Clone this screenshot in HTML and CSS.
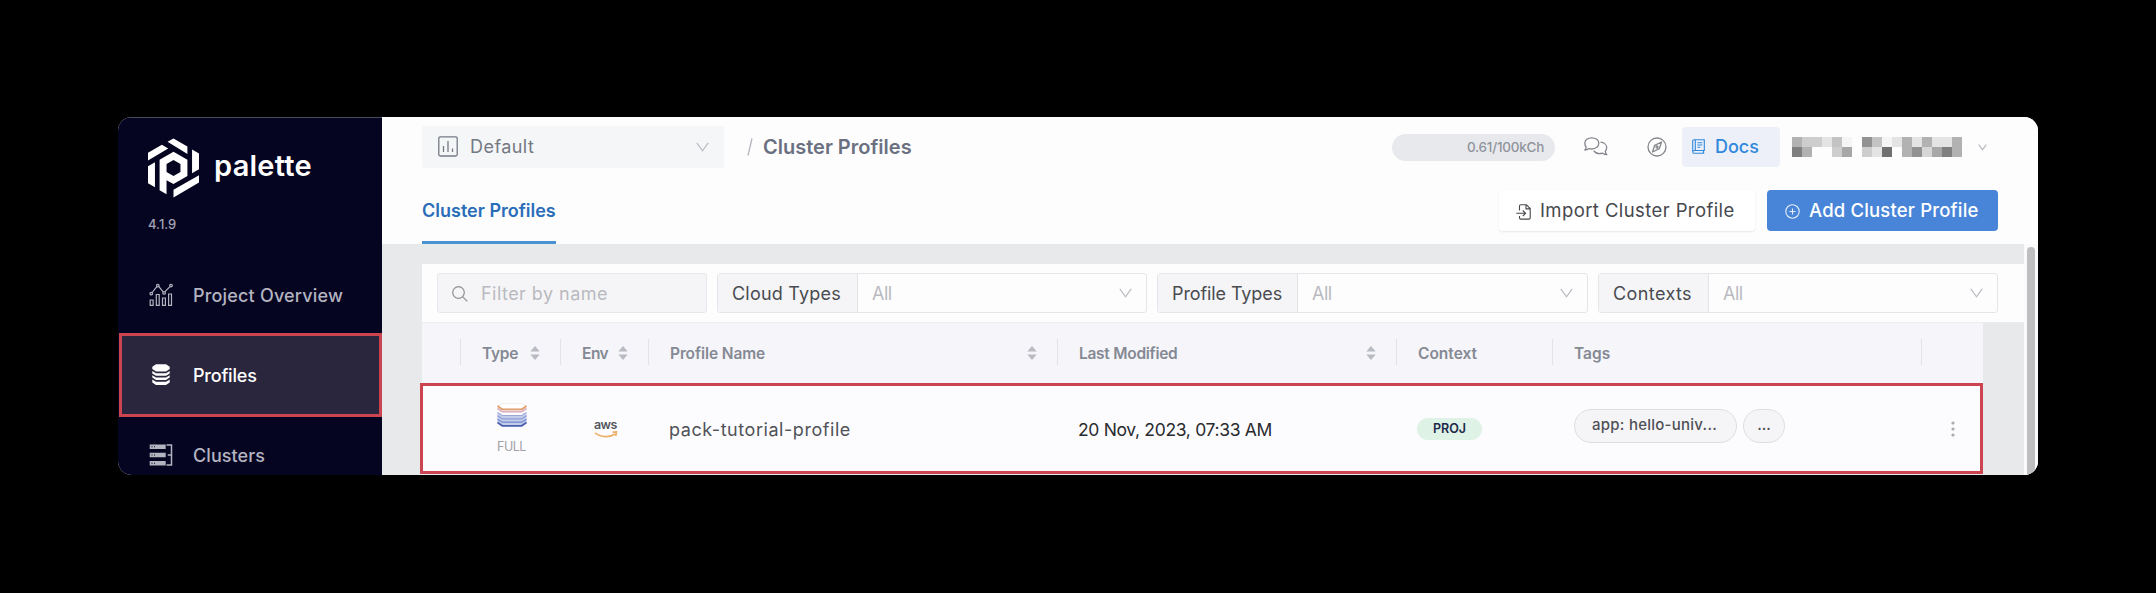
FILE: index.html
```
<!DOCTYPE html>
<html lang="en">
<head>
<meta charset="utf-8">
<title>Cluster Profiles</title>
<link rel="stylesheet" href="styles.css">
</head>
<body>
<div class="app">
  <aside class="sidebar">
    <div class="brand">
      <svg class="brand-mark" viewBox="144 114 154 180" fill="#fff">
        <path d="M144 158L186 134L205 145L144 181ZM203 125L221 115L263 139V162ZM277 148L298 160V208L277 220ZM298 226V248L221 293V270ZM144 199L165 187V262L144 250Z"/>
        <path fill-rule="evenodd" d="M179 179L221 155L263 179V228L221 252L200 241V283L179 271ZM221 180L200 192V216L221 228L242 216V192Z"/>
      </svg>
      <span class="brand-name">palette</span>
    </div>
    <span class="version">4.1.9</span>
    <nav class="nav">
      <a class="nav-item">
        <svg class="nav-icon" viewBox="0 0 24 24" fill="none" stroke="currentColor" stroke-width="1.2">
          <path d="M1.200 17h2.900v5.300H1.200zM7.300 11.500h2.900v10.800H7.300zM13.500 15h2.900v7.300h-2.900zM19.600 11h2.900v11.300h-2.900zM3.200 9.500l4.600-5.800M9.900 3.700l4.200 5.200M16 8.700l5-5"/>
          <circle cx="2.300" cy="10.600" r="1.300"/><circle cx="8.800" cy="2.600" r="1.300"/><circle cx="15.100" cy="9.900" r="1.300"/><circle cx="22" cy="2.600" r="1.300"/>
        </svg>
        <span class="nav-text overview">Project Overview</span>
      </a>
      <a class="nav-item active">
        <svg class="nav-icon" viewBox="0 0 24 24" fill="currentColor">
          <path d="M3.300 3.800L7 1.300h10l3.700 2.500v2.300L17 8.500H7L3.300 6.100z"/>
          <path d="M3.300 7.900L7 10.200h10l3.700-2.300v2.500L17 12.800H7l-3.700-2.400zM3.300 12.200L7 14.500h10l3.700-2.300v2.400L17 17H7l-3.700-2.400zM3.300 16.400L7 18.700h10l3.700-2.300v3L17 22H7l-3.700-2.600z"/>
        </svg>
        <span class="nav-text profiles">Profiles</span>
      </a>
      <a class="nav-item">
        <svg class="nav-icon" viewBox="0 0 24 24" fill="none" stroke="currentColor">
          <path stroke-width="4.400" d="M.7 3.800h16M.7 12h16M.7 20.200h16"/>
          <path stroke-width="1.500" d="M17.500 2h5v20h-5M18.800 12h3.700"/>
          <path stroke="#050522" stroke-width="1.100" d="M2.500 3.800h1M5 3.800h1M2.500 12h1M5 12h1M2.500 20.200h1M5 20.200h1"/>
        </svg>
        <span class="nav-text clusters">Clusters</span>
      </a>
    </nav>
  </aside>

  <main class="main">
    <header class="header">
      <div class="topbar">
        <div class="project">
          <svg class="project-icon" viewBox="0 0 20 21" fill="none" stroke="currentColor" stroke-width="1.300"><rect x=".8" y=".8" width="18.400" height="19.200" rx="1.500"/><path d="M5.500 10v6M10 5v11M14.500 12.500V16"/></svg>
          <span class="project-name">Default</span>
          <svg class="chevron" viewBox="0 0 13 10"><path d="M.8.8l5.700 8L12.200.8"/></svg>
        </div>
        <svg class="slash" viewBox="0 0 6 18"><path d="M5 .5L1 17.500"/></svg>
        <h1 class="title">Cluster Profiles</h1>
        <div class="tools">
          <div class="usage"><span class="usage-text">0.61/100kCh</span></div>
          <svg class="chat" viewBox="0 0 24 20" fill="none" stroke="currentColor" stroke-width="1.300" stroke-linejoin="round">
            <path d="M7.800.8c4 0 7 2.300 7 5.500s-3 5.700-7 5.700c-1 0-2-.1-2.900-.5C3.800 12.500 2.500 13 .8 13c1-1 1.400-2 1.300-3C1.200 9 .8 7.800.8 6.300.8 3.100 3.800.8 7.800.8z"/>
            <path d="M16.500 5.200c3.500.3 6.200 2.500 6.200 5.400 0 1.300-.5 2.600-1.400 3.600 0 1.200.5 2.300 1.500 3.500-1.600 0-3-.5-4.200-1.500-3.600 1-7.200 0-8.900-2.600"/>
          </svg>
          <svg class="compass" viewBox="0 0 20 20" fill="none" stroke="currentColor" stroke-width="1.300" stroke-linejoin="round"><circle cx="10" cy="10" r="9"/><path d="M14.500 5l-2.200 6.700L5.500 15l2.200-6.700z"/><circle cx="10" cy="10" r="1"/></svg>
          <a class="docs">
            <svg class="docs-icon" viewBox="0 0 13 15" fill="none" stroke="currentColor" stroke-width="1.100"><path d="M2 .7h10.300v10.800H2.200a1.400 1.400 0 0 0 0 2.800h10.100M.7 12.800V2A1.300 1.300 0 0 1 2 .7M3.300.7v10.800M11.500 11.500v2.800M5.300 3.700h5M5.300 6h5M5.300 8.300h3"/></svg>
            <span class="docs-text">Docs</span>
          </a>
          <svg class="user" viewBox="0 0 17 2" shape-rendering="crispEdges">
            <path fill="#b2b2b2" d="M0 0h1v1H0zM1 1h1v1H1zM11 0h1v2h-1zM13 0h1v1h-1zM16 0h1v2h-1z"/>
            <path fill="#808080" d="M0 1h1v1H0zM15 1h1v1h-1z"/>
            <path fill="#929292" d="M7 0h1v1H7zM12 1h1v1h-1z"/>
            <path fill="#cdcdcd" d="M1 0h2v1H1zM4 1h1v1H4zM7 1h1v1H7z"/>
            <path fill="#c3c3c3" d="M4 0h1v1H4zM8 0h1v1H8z"/>
            <path fill="#e4e4e4" d="M3 0h1v1H3zM8 1h1v1H8zM10 0h1v1h-1zM12 0h1v1h-1zM14 0h2v1h-2z"/>
            <path fill="#d6d6d6" d="M13 1h1v1h-1z"/>
            <path fill="#f5f5f5" d="M5 0h1v1H5zM9 0h1v1H9z"/>
            <path fill="#a7a7a7" d="M5 1h1v1H5zM14 1h1v1h-1z"/>
            <path fill="#707070" d="M9 1h1v1H9z"/>
          </svg>
          <svg class="chevron small" viewBox="0 0 9 7"><path d="M.7.7l3.800 5L8.300.7"/></svg>
        </div>
      </div>
      <div class="tabbar">
        <a class="tab"><span class="tab-text">Cluster Profiles</span></a>
        <div class="actions">
          <button class="btn import">
            <svg class="import-icon" viewBox="0 0 15 16" fill="none" stroke="currentColor" stroke-width="1.100"><path d="M3.500 6.500V2A1.300 1.300 0 0 1 4.800.7h5.500l3.900 3.900v9.200a1.300 1.300 0 0 1-1.300 1.300H4.800a1.300 1.300 0 0 1-1.300-1.300V12M10 .9v4h4M.3 9.300h9M6.800 6.500l2.800 2.800L6.800 12"/></svg>
            <span class="import-text">Import Cluster Profile</span>
          </button>
          <button class="btn add">
            <svg class="add-icon" viewBox="0 0 15 15" fill="none" stroke="currentColor" stroke-width="1.100"><circle cx="7.500" cy="7.500" r="6.700"/><path d="M7.500 4.500v6M4.500 7.500h6"/></svg>
            <span class="add-text">Add Cluster Profile</span>
          </button>
        </div>
      </div>
    </header>

    <section class="content">
      <div class="scroll">
        <div class="filters">
          <div class="search">
            <svg class="search-icon" viewBox="0 0 16 16" fill="none" stroke="currentColor" stroke-width="1.200"><circle cx="6.500" cy="6.500" r="5.800"/><path d="M10.800 10.800l4.500 4.500"/></svg>
            <span class="search-text">Filter by name</span>
          </div>
          <div class="filter cloud"><span class="filter-label"><span class="cloud-text">Cloud Types</span></span><span class="filter-value"><span class="all">All</span><svg class="chevron" viewBox="0 0 13 10"><path d="M.8.8l5.700 8L12.200.8"/></svg></span></div>
          <div class="filter types"><span class="filter-label"><span class="types-text">Profile Types</span></span><span class="filter-value"><span class="all">All</span><svg class="chevron" viewBox="0 0 13 10"><path d="M.8.8l5.700 8L12.200.8"/></svg></span></div>
          <div class="filter contexts"><span class="filter-label"><span class="contexts-text">Contexts</span></span><span class="filter-value"><span class="all">All</span><svg class="chevron" viewBox="0 0 13 10"><path d="M.8.8l5.700 8L12.200.8"/></svg></span></div>
        </div>
        <div class="table">
          <div class="row head">
            <div class="th"></div>
            <div class="th"><span class="type-text">Type</span><svg class="sort" viewBox="0 0 10 14"><path d="M5 0l4.700 5.500H.3zM5 14L.3 8.500h9.400z"/></svg></div>
            <div class="th tight"><span class="env-text">Env</span><svg class="sort" viewBox="0 0 10 14"><path d="M5 0l4.700 5.500H.3zM5 14L.3 8.500h9.400z"/></svg></div>
            <div class="th spread"><span class="name-text">Profile Name</span><svg class="sort" viewBox="0 0 10 14"><path d="M5 0l4.700 5.500H.3zM5 14L.3 8.500h9.400z"/></svg></div>
            <div class="th spread"><span class="modified-text">Last Modified</span><svg class="sort" viewBox="0 0 10 14"><path d="M5 0l4.700 5.500H.3zM5 14L.3 8.500h9.400z"/></svg></div>
            <div class="th"><span class="context-text">Context</span></div>
            <div class="th"><span class="tags-text">Tags</span></div>
            <div class="th"></div>
          </div>
          <div class="row item">
            <div class="td"></div>
            <div class="td type">
              <svg class="stack" viewBox="0 0 30 24" fill="none" stroke-width="1.200">
                <path fill="#fff" stroke="#f0e9ea" stroke-width=".8" d="M.5 3.500L5 .7h20l4.500 2.800L25 6H5z"/>
                <path stroke="#e3a06d" stroke-width="1.800" d="M.5 3l4.800 3.300h19.400L29.500 3"/>
                <path stroke="#d9b0bd" stroke-width="1.800" d="M.5 5.500l4.800 3.200h19.400l4.800-3.200"/>
                <path fill="#c3cdea" stroke="none" d="M.3 10l5 3h19.400l5-3v10l-5 3.300H5.300l-5-3.300z"/>
                <path stroke="#9aa8d8" d="M.5 9.500l4.800 3h19.400l4.800-3"/>
                <path stroke="#8e9fd6" d="M.5 12.800l4.800 3h19.400l4.800-3"/>
                <path stroke="#7288cb" d="M.5 16.200l4.800 3h19.400l4.800-3"/>
                <path stroke="#4b5fae" stroke-width="1.800" d="M.5 19.500l4.800 3.300h19.400l4.800-3.300"/>
              </svg>
              <span class="full-text">FULL</span>
            </div>
            <div class="td env">
              <span class="aws-text">aws</span>
              <svg class="aws-smile" viewBox="0 0 24 8" fill="none" stroke="#edb26a" stroke-width="1.700"><path d="M1 1.800c6 4.800 15 4.800 20 1.200M18.500 1.200l4-.2-.8 4"/></svg>
            </div>
            <div class="td"><span class="profile-text">pack-tutorial-profile</span></div>
            <div class="td"><span class="date-text">20 Nov, 2023, 07:33 AM</span></div>
            <div class="td"><span class="badge"><span class="proj-text">PROJ</span></span></div>
            <div class="td tags"><span class="tag"><span class="tag-text">app: hello-univ...</span></span><span class="tag more"><span class="more-text">...</span></span></div>
            <div class="td menu"><svg class="kebab" viewBox="0 0 4 16"><circle cx="2" cy="2" r="1.600"/><circle cx="2" cy="8" r="1.600"/><circle cx="2" cy="14" r="1.600"/></svg></div>
          </div>
        </div>
      </div>
      <div class="scrollbar"><div class="thumb"></div></div>
    </section>
  </main>
</div>
</body>
</html>
```
FILE: styles.css
```
* { box-sizing: border-box; }
body { margin: 0; padding: 117px 118px 0; height: 593px; background: #000; font-family: Inter, "Open Sans", sans-serif; font-size: 18px; line-height: 1; overflow: hidden; }
svg { display: block; flex: none; }
span, h1 { white-space: nowrap; line-height: 1.25; }

.app { display: grid; grid-template-columns: 264px 1fr; width: 1920px; height: 358px; border-radius: 14px; overflow: hidden; background: #fdfdfe; }

.sidebar { background: #050522; color: #b4b4c0; border-top: 1px solid #4a4a5c; }
.brand { display: flex; align-items: center; height: 60px; margin: 20px 0 0 30px; gap: 15px; }
.brand-mark { width: 51px; height: 60px; }
.brand-name { color: #fff; font-size: 29px; font-weight: 600; letter-spacing: .25px; padding-bottom: 3px; }
.version { display: block; margin: 19px 0 0 30px; font-size: 13px; line-height: 14px; font-weight: 500; color: #a3a3b3; }
.nav { margin-top: 24px; }
.nav-item { display: flex; align-items: center; height: 80px; padding-left: 31px; gap: 20px; }
.nav-item.active { height: 84px; margin: -2px 0 -2px 1px; padding-left: 27px; border: 3px solid #cb4450; background: #29263d; color: #fff; }
.nav-icon { width: 24px; height: 24px; }
.nav-text { font-weight: 500; padding-top: 2px; }
.overview { letter-spacing: .18px; }
.profiles { letter-spacing: -.2px; }
.clusters { letter-spacing: .08px; }

.main { min-width: 0; display: flex; flex-direction: column; }
.header { height: 127px; padding: 9px 40px 0; background: #fdfdfe; }
.topbar { display: flex; align-items: center; height: 42px; }
.project { display: flex; align-items: center; width: 302px; height: 42px; padding: 0 15px 0 16px; background: #f5f6f8; color: #747983; border-radius: 2px; }
.project-icon { width: 20px; height: 21px; margin: 0 12px 2px 0; }
.project-name { letter-spacing: .45px; padding-top: 1px; }
.chevron { width: 13px; height: 10px; margin-left: auto; fill: none; stroke: #b9bbc1; stroke-width: 1.2; }
.slash { width: 6px; height: 18px; margin: 0 10px 1px 23px; fill: none; stroke: #b3b6bd; stroke-width: 1.3; }
.title { margin: 0; font-size: 20px; font-weight: 600; color: #6b7081; }
.tools { display: flex; align-items: center; margin-left: auto; margin-right: -29px; width: 635px; }
.usage { display: flex; align-items: center; justify-content: flex-end; width: 163px; height: 27px; padding-right: 11px; border-radius: 14px; background: #e8e9ec; color: #8f949d; }
.usage-text { font-size: 13.5px; font-weight: 500; letter-spacing: -.25px; padding-top: 1px; }
.chat { width: 24px; height: 20px; margin-left: 29px; color: #85878d; }
.compass { width: 20px; height: 20px; margin: 0 0 1px 39px; color: #85878d; }
.docs { display: flex; align-items: center; gap: 10px; width: 98px; height: 40px; margin: 0 0 1px 15px; padding-left: 10px; border-radius: 4px; background: #edf0f8; color: #2f88dc; }
.docs-icon { width: 13px; height: 15px; }
.docs-text { font-weight: 500; padding-top: 1px; }
.user { width: 170px; height: 20px; margin-left: 12px; }
.chevron.small { width: 9px; height: 7px; margin-left: 16px; }

.tabbar { display: flex; justify-content: space-between; height: 76px; padding-top: 22px; }
.tab { display: flex; width: 134px; height: 54px; padding-top: 10px; border-bottom: 3px solid #4a93d3; color: #2a6db9; font-weight: 600; }
.actions { display: flex; gap: 12px; }
.btn { display: flex; align-items: center; height: 41px; padding: 0 0 0 18px; border: 0; border-radius: 4px; font: 18.5px/1 Inter, "Open Sans", sans-serif; }
.import { width: 256px; padding-left: 17px; gap: 9px; color: #46484d; background: #fff; box-shadow: 0 1px 2px rgba(40, 40, 80, .1); }
.import-icon { width: 15px; height: 16px; margin-top: 2px; }
.import-text { letter-spacing: .4px; }
.add { width: 231px; gap: 9px; background: #4885d8; color: #fff; font-weight: 500; }
.add-icon { width: 15px; height: 15px; margin-top: 2px; opacity: .85; }
.add-text { letter-spacing: .17px; }

.content { display: grid; grid-template-columns: 1642px 14px; height: 231px; background: #e8e9eb; }
.scroll { padding: 20px 0 0 40px; }
.filters { display: flex; gap: 10px; height: 59px; padding: 9px 25px 9px 15px; background: #fdfdfe; border-bottom: 1px solid #ececf0; }
.search { display: flex; align-items: center; gap: 13px; width: 270px; border: 1px solid #e8e8ec; border-radius: 3px; background: #f5f5f7; padding-left: 14px; color: #8e8f94; }
.search-icon { width: 16px; height: 16px; margin-top: 1px; }
.search-text, .all { color: #b9bac0; padding-top: 2px; }
.search-text { letter-spacing: .46px; padding-top: 3px; }
.all { letter-spacing: -.5px; }
.filter { display: flex; border: 1px solid #e6e6ea; border-radius: 3px; }
.cloud { width: 430px; }
.types { width: 431px; }
.contexts { width: 400px; }
.filter-label { display: flex; align-items: center; width: 140px; padding: 2px 0 0 14px; background: #f5f5f7; border-right: 1px solid #e3e3e7; color: #494b50; }
.contexts .filter-label { width: 110px; }
.cloud-text { letter-spacing: .2px; }
.types-text { letter-spacing: -.1px; }
.contexts-text { letter-spacing: .4px; }
.filter-value { display: flex; flex: 1; align-items: center; padding: 0 14px; }

.row { display: grid; grid-template-columns: 39px 100px 88px 409px 339px 156px 369px 61px; width: 1561px; }
.head { height: 60px; padding: 16px 0 18px; background: #f5f5fa; color: #858993; font-size: 15.5px; font-weight: 600; }
.th { display: flex; align-items: center; gap: 12px; padding-left: 21px; border-right: 1px solid #e3e4ea; }
.th > span { padding-top: 3px; }
.th:last-child { border: 0; }
.th.tight { gap: 10px; }
.spread { justify-content: space-between; padding-right: 20px; }
.sort { width: 10px; height: 14px; margin-top: 2px; fill: #b9bbc2; }
.type-text { letter-spacing: -.3px; }
.env-text { letter-spacing: -.5px; }
.name-text { letter-spacing: -.1px; }
.modified-text { letter-spacing: -.27px; }
.item { grid-template-columns: 38px 100px 88px 409px 339px 156px 369px 58px; width: 1563px; height: 91px; margin-left: -2px; border: 3px solid #cc4450; background: #fcfcfe; }
.td { display: flex; align-items: center; padding-left: 20px; }
.type { flex-direction: column; align-items: flex-start; padding: 17px 0 0 36px; gap: 12px; color: #a2a2a7; }
.stack { width: 30px; height: 24px; }
.full-text { font-size: 12.5px; letter-spacing: -.5px; }
.env { flex-direction: column; align-items: flex-start; padding: 33px 0 0 33px; color: #55565c; }
.aws-text { font-size: 12.5px; font-weight: 600; line-height: 12px; letter-spacing: -.6px; }
.aws-smile { width: 24px; height: 8px; }
.profile-text { color: #505258; letter-spacing: .55px; padding-top: 3px; }
.date-text { color: #292a2e; font-size: 17.5px; letter-spacing: -.33px; padding-top: 2px; }
.badge { display: flex; align-items: center; justify-content: center; width: 65px; height: 22px; margin-top: 1px; border-radius: 11px; background: #dff2e6; color: #1c2948; }
.proj-text { font-size: 12.5px; font-weight: 600; }
.tags { gap: 6px; padding: 0 0 6px 21px; }
.tag { display: flex; align-items: center; justify-content: center; width: 163px; height: 34px; border: 1px solid #dedee2; border-radius: 17px; background: #f5f5f7; color: #4f5056; }
.tag.more { width: 42px; }
.tag-text, .more-text { font-size: 15px; font-weight: 500; }
.tag-text { letter-spacing: .25px; margin-right: 2px; }
.menu { padding-left: 29px; }
.kebab { width: 4px; height: 16px; fill: #a9aab0; }
.scrollbar { padding: 3px 3px 0; background: #fafafc; }
.thumb { height: 240px; border-radius: 4px; background: #bebec0; }
```
